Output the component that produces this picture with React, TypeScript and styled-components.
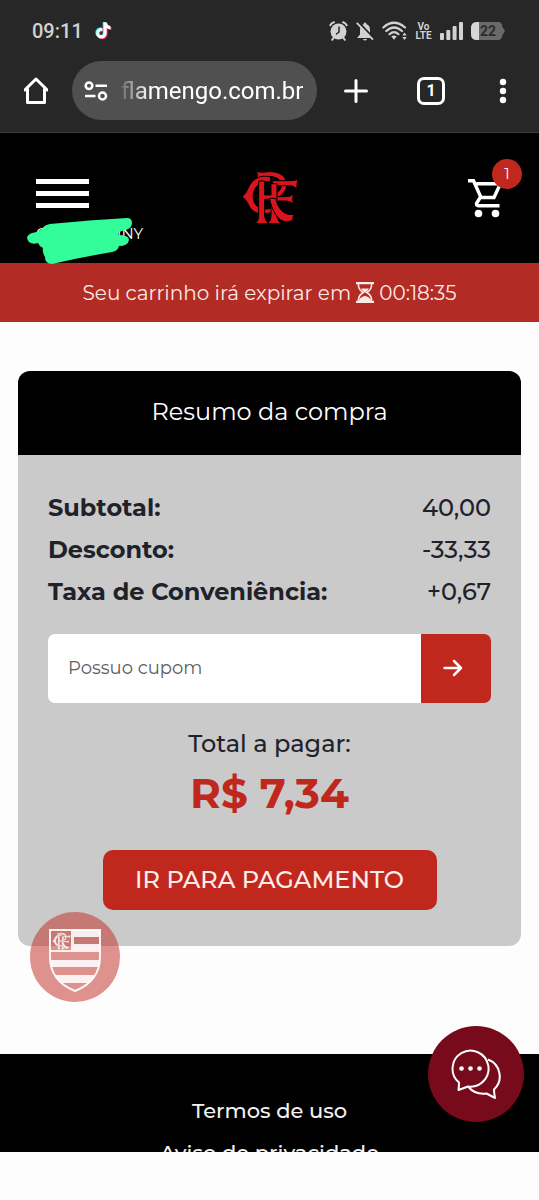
import React from "react";
import styled, { createGlobalStyle } from "styled-components";

const GlobalStyle = createGlobalStyle`
  *, *::before, *::after { box-sizing: border-box; }
  body { margin: 0; background: #fdfdfd; }
  button, input { font: inherit; color: inherit; border: 0; padding: 0; margin: 0; background: none; }
  button { cursor: pointer; }
  a { color: inherit; text-decoration: none; }
  svg { display: block; }
`;

const siteFont = `Montserrat, Inter, "Liberation Sans", sans-serif`;
const red = "#c1281d";

const Phone = styled.div`
  height: 100vh;
  display: flex;
  flex-direction: column;
  background: #fdfdfd;
  font-family: ${siteFont};
`;

const Chrome = styled.div`
  flex: none;
  background: #272727;
  color: #fff;
  font-family: Roboto, sans-serif;
  border-bottom: 1px solid #3a3a3a;
`;

const StatusBar = styled.div`
  display: flex;
  align-items: center;
  justify-content: space-between;
  height: 60px;
  padding: 2px 34px 0 32px;
  color: #d2d2d2;
`;

const StatusGroup = styled.div<{ $gap: number }>`
  display: flex;
  align-items: center;
  gap: ${(p) => p.$gap}px;
`;

const Clock = styled.time`
  font-size: 20px;
  font-weight: 500;
  line-height: 24px;
`;

const Volte = styled.span`
  width: 17px;
  font-size: 10px;
  font-weight: 700;
  line-height: 9px;
  text-align: center;
`;

const Toolbar = styled.div`
  display: flex;
  align-items: center;
  gap: 24px;
  padding: 1px 27px 12px 24px;
`;

const IconButton = styled.button`
  display: flex;
  align-items: center;
  justify-content: center;
  flex: none;
`;

const AddressPill = styled.div`
  flex: 1;
  min-width: 0;
  display: flex;
  align-items: center;
  gap: 13px;
  height: 59px;
  padding: 0 8px 0 12px;
  border-radius: 30px;
  background: #505050;
`;

const Address = styled.input`
  flex: 1;
  min-width: 0;
  width: 100%;
  font-size: 24px;
  line-height: 32px;
  outline: none;
  mask-image: linear-gradient(to right, rgba(0, 0, 0, 0.15), #000 28px);
`;

const Actions = styled.div`
  display: flex;
  align-items: center;
  gap: 49px;
  padding-left: 3px;
`;

const TabCount = styled.button`
  width: 28px;
  height: 28px;
  border: 3px solid #fff;
  border-radius: 7px;
  font-size: 16px;
  font-weight: 700;
  line-height: 20px;
`;

const Viewport = styled.div`
  position: relative;
  flex: 1;
  min-height: 0;
  overflow: hidden;
`;

const Header = styled.header`
  display: grid;
  grid-template-columns: 1fr auto 1fr;
  align-items: start;
  height: 130px;
  padding: 0 36px;
  background: #000;
  color: #fff;
`;

const Account = styled.div`
  padding-top: 46px;
`;

const Burger = styled.button`
  display: flex;
  flex-direction: column;
  gap: 7px;
  width: 53px;

  span {
    height: 5px;
    width: 100%;
    background: #fff;
  }
`;

const UserName = styled.div`
  position: relative;
  display: flex;
  justify-content: space-between;
  width: 107px;
  margin-top: 16px;
  font-size: 15px;
  line-height: 20px;
`;

const Scribble = styled.svg`
  position: absolute;
  left: -12px;
  top: -10px;
  z-index: 1;
`;

const LogoLink = styled.a`
  padding-top: 36px;
`;

const CartLink = styled.a`
  position: relative;
  justify-self: end;
  margin-top: 43px;
`;

const Badge = styled.span`
  position: absolute;
  right: -19px;
  top: -17px;
  width: 30px;
  height: 30px;
  border-radius: 50%;
  background: ${red};
  font-size: 15px;
  line-height: 30px;
  text-align: center;
`;

const Notice = styled.div`
  display: flex;
  align-items: center;
  justify-content: center;
  gap: 5px;
  min-height: 59px;
  background: #b22b24;
  color: #fbe9e4;
  font-size: 20px;
  line-height: 28px;
  white-space: nowrap;
`;

const Main = styled.main`
  padding: 49px 18px 108px;
`;

const Card = styled.section`
  border-radius: 12px;
  overflow: hidden;
  background: #cacaca;
  color: #212229;
`;

const CardTitle = styled.h1`
  margin: 0;
  padding: 25px 16px 27px;
  background: #000;
  color: #fff;
  font-size: 24px;
  font-weight: 400;
  line-height: 32px;
  text-align: center;
`;

const CardBody = styled.div`
  display: flex;
  flex-direction: column;
  align-items: center;
  padding: 32px 30px 36px;
`;

const Lines = styled.dl`
  align-self: stretch;
  margin: 0 0 21px;
`;

const Line = styled.div`
  display: flex;
  justify-content: space-between;
  font-size: 24px;
  line-height: 42px;

  dt { font-weight: 700; }
  dd { margin: 0; font-weight: 500; }
`;

const Coupon = styled.form`
  align-self: stretch;
  display: flex;
  height: 69px;
  border-radius: 7px;
  overflow: hidden;
`;

const CouponInput = styled.input`
  flex: 1;
  min-width: 0;
  padding: 0 20px 2px;
  background: #fff;
  font-size: 18px;

  &::placeholder { color: #5d6064; opacity: 1; }
`;

const CouponButton = styled(IconButton)`
  width: 70px;
  padding: 0 6px 2px 0;
  background: ${red};
  color: #fff;
`;

const TotalLabel = styled.p`
  margin: 20px 0 0;
  font-size: 24px;
  font-weight: 500;
  line-height: 42px;
`;

const TotalValue = styled.strong`
  color: ${red};
  font-size: 42px;
  font-weight: 700;
  line-height: 56px;
`;

const PayButton = styled.button`
  width: 334px;
  max-width: 100%;
  height: 60px;
  margin-top: 29px;
  padding-bottom: 2px;
  border-radius: 10px;
  background: ${red};
  color: #fdeeea;
  font-size: 24px;
  font-weight: 500;
  white-space: nowrap;
`;

const Footer = styled.footer`
  display: flex;
  flex-direction: column;
  align-items: center;
  padding: 36px 16px;
  background: #000;
  color: #f2f2f2;
  font-size: 21px;
  font-weight: 500;
  line-height: 42px;
`;

const CrestButton = styled(IconButton)`
  position: absolute;
  left: 30px;
  bottom: 150px;
  width: 90px;
  height: 90px;
  padding-top: 8px;
  border-radius: 50%;
  background: rgba(193, 40, 29, 0.5);
`;

const ChatButton = styled(IconButton)`
  position: absolute;
  right: 15px;
  bottom: 30px;
  width: 96px;
  height: 96px;
  border-radius: 50%;
  background: #770a1b;
`;

const SystemNav = styled.div`
  flex: none;
  height: 48px;
  background: #fdfdfd;
`;

function Monogram({ color, edge }: { color: string; edge: string }) {
  return (
    <g fill={color} stroke={edge} strokeWidth="3" strokeLinejoin="round">
      <path d="M78 46Q90 52 106 49C139 44 168 56 170 84C171 104 158 119 139 127L132 116C146 110 156 99 154 85C151 66 128 60 106 63Q92 66 80 66Q86 56 78 46Z" />
      <path d="M127 75H182Q194 75 204 71Q199 87 201 101Q193 90 179 90H141V123H170Q181 123 190 115Q187 130 189 146Q181 136 169 136H127Z" />
      <path d="M122 64C90 55 66 72 56 94C51 107 45 116 36 123C45 129 51 137 56 149C68 174 94 181 126 170V156C101 166 81 157 73 141C65 120 71 98 87 86C98 77 112 76 122 80Z" />
      <path d="M86 76H104V118H123V84H141V182Q142 195 153 204H113Q123 195 123 182V131H104V182Q105 195 116 204H76Q86 195 86 182Z" />
      <path d="M118 128H137C144 160 162 181 193 176Q187 184 189 194C150 211 129 174 118 128Z" />
    </g>
  );
}

function AlarmIcon() {
  return (
    <svg width="19" height="20" viewBox="0 0 19 20" fill="none" stroke="currentColor" strokeLinecap="round">
      <path d="M1.3 4.2Q2.5 1.8 5 1.2M17.7 4.2Q16.5 1.8 14 1.2" strokeWidth="2" />
      <path d="M4.5 17L3.2 18.8M14.5 17l1.3 1.8" strokeWidth="2" />
      <circle cx="9.500" cy="10.500" r="8" fill="currentColor" stroke="none" />
      <path d="M10 6v5l-2.500 2" stroke="#272727" strokeWidth="1.500" />
    </svg>
  );
}

function MutedBellIcon() {
  return (
    <svg width="18" height="20" viewBox="0 0 18 20">
      <path d="M9 1.500Q10.500 1.500 10.500 3.200Q14 4.500 14 9v4.500l2.500 3v.6H1.500v-.6l2.500-3V9Q4 4.500 7.500 3.200Q7.500 1.500 9 1.500zM7 18h4q-.5 1.600-2 1.600T7 18z" fill="currentColor" />
      <path d="M2 .6L18.400 18" stroke="#272727" strokeWidth="2" />
      <path d="M.8 1.800L17 18.600" stroke="currentColor" strokeWidth="1.800" />
    </svg>
  );
}

function WifiIcon() {
  return (
    <svg width="25" height="20" viewBox="0 0 25 20" fill="none" stroke="currentColor" strokeWidth="2.200" strokeLinecap="round">
      <path d="M1.300 6.500Q12 -3 23 6.500M4.300 10Q12 3 20 10M7.500 13.200Q12 9 16.500 13.200" />
      <path d="M9.300 15.500Q12 13.500 14.700 15.500L12 18.800z" fill="currentColor" stroke="none" />
      <path d="M22.500 11.500l2.200 3h-4.400zM22.500 19l2.200-3h-4.400z" fill="currentColor" stroke="none" />
    </svg>
  );
}

function SignalIcon() {
  return (
    <svg width="23" height="18" viewBox="0 0 23 18" fill="currentColor">
      <rect x="0" y="11" width="4" height="7" rx="1" />
      <rect x="6.300" y="8" width="4" height="10" rx="1" />
      <rect x="12.600" y="4" width="4" height="14" rx="1" />
      <rect x="19" y="0" width="4" height="18" rx="1" />
    </svg>
  );
}

function BatteryIcon() {
  return (
    <svg width="34" height="18" viewBox="0 0 34 18">
      <path d="M6 0H27Q31 0 31.500 5L34 9L31.500 13Q31 18 27 18H6Q0 18 0 12V6Q0 0 6 0z" fill="#6a6a6a" />
      <path d="M6 0H8V18H6Q0 18 0 12V6Q0 0 6 0z" fill="#d6d6d6" />
      <text x="17" y="14" fontSize="14" fontWeight="700" textAnchor="middle" fill="#2c2c2c">22</text>
    </svg>
  );
}

function TikTokIcon() {
  const note = "M8.500 1.500h3.300q.5 3.200 3.700 3.700v3q-2.200 0-3.800-1.200v5.200a5.300 5.300 0 1 1-5.300-5.300q.5 0 1 .1v3.200a2.200 2.200 0 1 0 1.100 1.900z";
  return (
    <svg width="17" height="20" viewBox="0 0 17 20">
      <path d={note} fill="#25e5dd" transform="translate(-.8 -.6)" />
      <path d={note} fill="#f0335c" transform="translate(.9 .8)" />
      <path d={note} fill="#fff" />
    </svg>
  );
}

function Hourglass() {
  return (
    <svg width="18" height="21" viewBox="0 0 18 21" fill="none" stroke="currentColor" strokeWidth="1.600">
      <path d="M0 1.200h18M0 19.800h18" strokeWidth="2.200" />
      <path d="M2.500 2v2Q3 8 7.300 10.500Q3 13 2.500 17v2M15.500 2v2Q15 8 10.700 10.500Q15 13 15.500 17v2" />
      <path d="M5 6.500h8Q12 8.800 9 10.500Q6 8.800 5 6.500zM3.300 19v-2Q6 14.500 9 13.800Q12 14.500 14.700 17v2z" fill="currentColor" stroke="none" />
    </svg>
  );
}

const totals = [
  ["Subtotal:", "40,00"],
  ["Desconto:", "-33,33"],
  ["Taxa de Conveniência:", "+0,67"],
];

export default function App() {
  return (
    <Phone>
      <GlobalStyle />
      <Chrome>
        <StatusBar>
          <StatusGroup $gap={12}>
            <Clock>09:11</Clock>
            <TikTokIcon />
          </StatusGroup>
          <StatusGroup $gap={8}>
            <AlarmIcon />
            <MutedBellIcon />
            <WifiIcon />
            <Volte>Vo LTE</Volte>
            <SignalIcon />
            <BatteryIcon />
          </StatusGroup>
        </StatusBar>
        <Toolbar>
          <IconButton aria-label="Página inicial">
            <svg width="24" height="28" viewBox="0 0 24 28" fill="none" stroke="currentColor" strokeWidth="3" strokeLinejoin="round" strokeLinecap="round">
              <path d="M0.800 13L12 2L23.200 13M3.500 12V25.500H20.500V12" />
            </svg>
          </IconButton>
          <AddressPill>
            <svg width="24" height="20" viewBox="0 0 24 20" fill="none" stroke="currentColor" strokeWidth="2.500">
              <circle cx="5" cy="4.700" r="3.300" />
              <path d="M11.500 4.700H23M1 15H11.500" />
              <circle cx="18.500" cy="15" r="3.500" />
            </svg>
            <Address aria-label="Endereço" readOnly value="flamengo.com.br" />
          </AddressPill>
          <Actions>
            <IconButton aria-label="Nova guia">
              <svg width="24" height="24" viewBox="0 0 24 24" stroke="currentColor" strokeWidth="3" strokeLinecap="round">
                <path d="M12 1.500V22.500M1.500 12H22.500" />
              </svg>
            </IconButton>
            <TabCount aria-label="Guias abertas">1</TabCount>
            <IconButton aria-label="Menu do navegador">
              <svg width="18" height="26" viewBox="0 0 18 26" fill="currentColor">
                <circle cx="9" cy="4" r="3.200" />
                <circle cx="9" cy="13" r="3.200" />
                <circle cx="9" cy="22" r="3.200" />
              </svg>
            </IconButton>
          </Actions>
        </Toolbar>
      </Chrome>

      <Viewport>
        <Header>
          <Account>
            <Burger aria-label="Menu">
              <span />
              <span />
              <span />
            </Burger>
            <UserName>
              <span>C</span>
              <span>INY</span>
              <Scribble width="112" height="52" viewBox="24 215 112 52" fill="#33fd9b">
                <path d="M32 234Q38 233 42 230Q44 226 50 225Q90 221 127 219Q132 219 132 224Q132 229 126 231Q118 232 118 236Q129 236 129 241Q128 247 119 247Q118 252 112 253Q82 258 52 265Q45 265 45 258Q42 253 43 249Q39 247 38 244Q33 246 29 243Q24 237 32 234Z" />
              </Scribble>
            </UserName>
          </Account>
          <LogoLink href="#" aria-label="Flamengo">
            <svg width="56" height="56" viewBox="36 40 168 168">
              <Monogram color="#d9141c" edge="#000" />
            </svg>
          </LogoLink>
          <CartLink href="#" aria-label="Carrinho">
            <svg width="38" height="42" viewBox="0 0 38 42" fill="none" stroke="currentColor" strokeWidth="3.400">
              <path d="M3 4.700H8.500L16 21.500H29L35.500 7.500M10 7.700H36M15.500 21L11.500 27.500Q11 29.700 13.500 29.700H34.500" />
              <circle cx="13.500" cy="37.500" r="3.800" fill="currentColor" stroke="none" />
              <circle cx="30.500" cy="37.500" r="3.800" fill="currentColor" stroke="none" />
            </svg>
            <Badge>1</Badge>
          </CartLink>
        </Header>

        <Notice>
          <span>Seu carrinho irá expirar em</span>
          <Hourglass />
          <span>00:18:35</span>
        </Notice>

        <Main>
          <Card>
            <CardTitle>Resumo da compra</CardTitle>
            <CardBody>
              <Lines>
                {totals.map(([label, value]) => (
                  <Line key={label}>
                    <dt>{label}</dt>
                    <dd>{value}</dd>
                  </Line>
                ))}
              </Lines>
              <Coupon onSubmit={(e) => e.preventDefault()}>
                <CouponInput aria-label="Possuo cupom" placeholder="Possuo cupom" />
                <CouponButton aria-label="Aplicar cupom">
                  <svg width="20" height="20" viewBox="0 0 20 20" fill="none" stroke="currentColor" strokeWidth="2.500" strokeLinecap="round" strokeLinejoin="round">
                    <path d="M1.500 10H18M11 3L18 10L11 17" />
                  </svg>
                </CouponButton>
              </Coupon>
              <TotalLabel>Total a pagar:</TotalLabel>
              <TotalValue>R$ 7,34</TotalValue>
              <PayButton>IR PARA PAGAMENTO</PayButton>
            </CardBody>
          </Card>
        </Main>

        <Footer>
          <a href="#">Termos de uso</a>
          <a href="#">Aviso de privacidade</a>
        </Footer>

        <CrestButton aria-label="Flamengo">
          <svg width="52" height="64" viewBox="0 0 52 64">
            <defs>
              <clipPath id="shield">
                <path d="M1 1H51V28Q51 52 26 62Q1 52 1 28Z" />
              </clipPath>
            </defs>
            <g clipPath="url(#shield)" fill="#fff" fillOpacity="0.870">
              <path d="M25 1H51V8H25ZM1 17V23H51V15H25V1H22V21H1ZM1 31H51V38H1ZM1 46H51V54H1Z" />
            </g>
            <path d="M1 1H51V28Q51 52 26 62Q1 52 1 28Z" fill="none" stroke="#fff" strokeOpacity="0.900" strokeWidth="2" />
            <svg x="3" y="3" width="19" height="18" viewBox="36 40 168 168">
              <Monogram color="#fbeeee" edge="#c77872" />
            </svg>
          </svg>
        </CrestButton>
        <ChatButton aria-label="Abrir conversa">
          <svg width="52" height="52" viewBox="0 0 52 52" fill="none" stroke="#fff" strokeWidth="2" strokeLinejoin="round">
            <path d="M9 34.500A18 18 0 1 1 18 38.500L8.500 42Q9 38 9 34.500Z" />
            <path d="M38 11.500A18 18 0 0 1 44 41.500Q44 45 45 50L36.500 45.500Q25 47 18 38.500" />
            <g fill="#fff" stroke="none">
              <circle cx="11.500" cy="20.500" r="2.300" />
              <circle cx="20.500" cy="20.500" r="2.300" />
              <circle cx="29.500" cy="20.500" r="2.300" />
            </g>
          </svg>
        </ChatButton>
      </Viewport>
      <SystemNav />
    </Phone>
  );
}
